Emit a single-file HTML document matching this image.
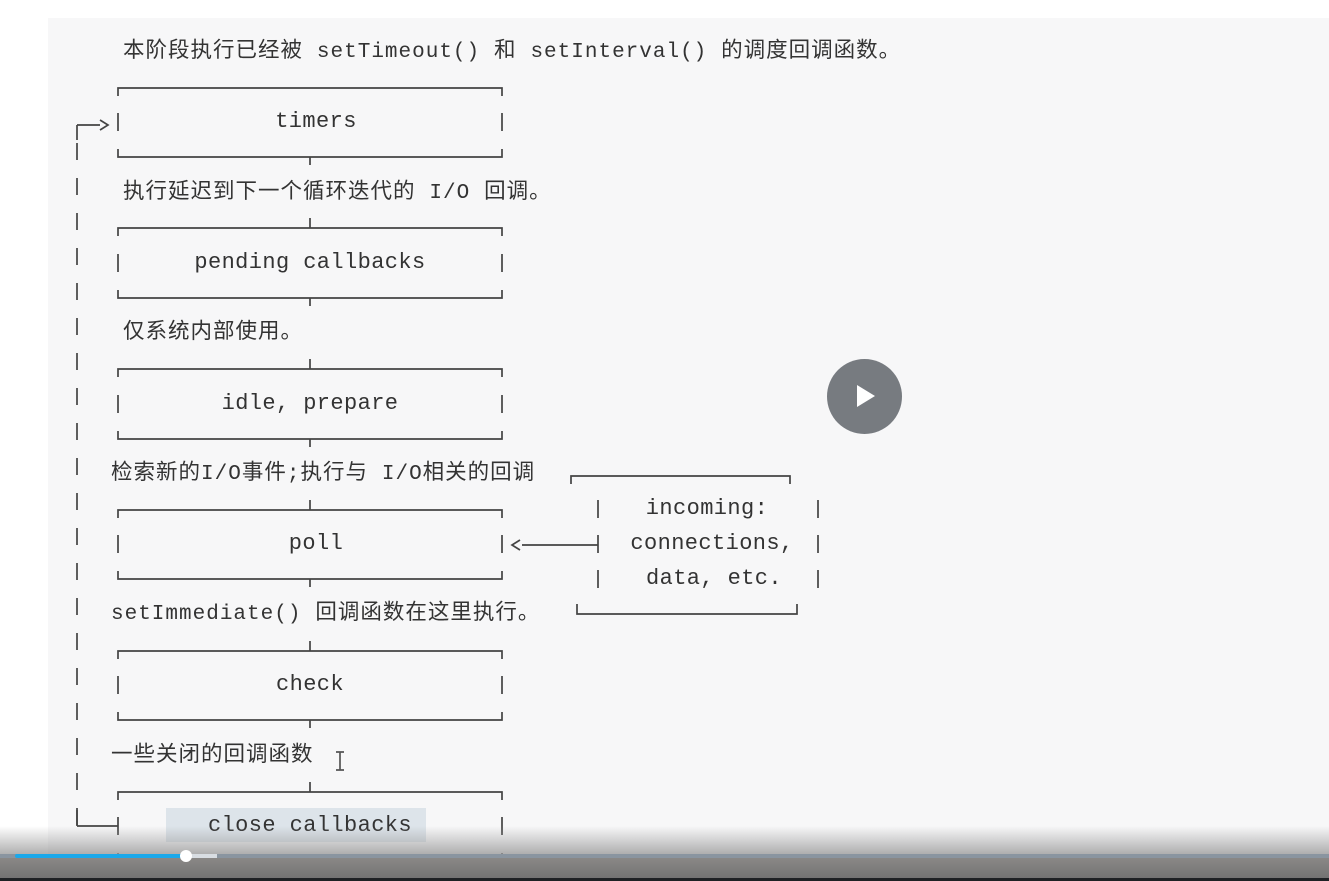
<!DOCTYPE html>
<html><head><meta charset="utf-8"><style>
*{margin:0;padding:0;box-sizing:border-box}
body{width:1329px;height:881px;overflow:hidden;background:#fff;position:relative;font-family:"Liberation Mono",monospace;color:#363636}
#panel{position:absolute;left:48px;top:18px;width:1281px;height:863px;background:#f7f7f8}
.m{position:absolute;font-family:"Liberation Mono",monospace;font-size:22px;letter-spacing:0.4px;line-height:24px;white-space:pre;color:#333}
.c{position:absolute;font-family:"Liberation Mono","Noto Sans CJK SC",monospace;font-size:21.5px;letter-spacing:1px;line-height:24px;white-space:pre;color:#333}
.c span{font-size:21px}
.ctr{transform:translateX(-50%);text-align:center}
svg{position:absolute;left:0;top:0}
</style></head><body>
<div id="panel"></div>
<div style="position:absolute;left:166px;top:808px;width:260px;height:34px;background:#dde4ea"></div>
<svg width="1329" height="881" id="lines"><g stroke="#444" stroke-width="1.7" fill="none">
<path d="M118 96V88H502V96 M118 113V131 M502 113V131 M118 149V157H502V149 M310 157V165"/>
<path d="M310 218V228 M118 236V228H502V236 M118 254V272 M502 254V272 M118 290V298H502V290 M310 298V306"/>
<path d="M310 359V369 M118 377V369H502V377 M118 395V413 M502 395V413 M118 431V439H502V431 M310 439V447"/>
<path d="M310 500V510 M118 518V510H502V518 M118 535V553 M502 535V553 M118 571V579H502V571 M310 579V587"/>
<path d="M310 641V651 M118 659V651H502V659 M118 676V694 M502 676V694 M118 712V720H502V712 M310 720V728"/>
<path d="M310 782V792 M118 800V792H502V800 M118 817V835 M502 817V835 M118 853V861H502V853"/>
<path d="M571 484V476H790V484 M598 500V518 M818 500V518 M598 535V553 M818 535V553 M598 570V588 M818 570V588 M577 604V614H797V604"/>
<path d="M522 545H598 M520 540L512 545L520 550"/>
<path d="M77 125H100 M100 120L108 125L100 130 M77 826H118"/>
<path d="M77 125V826" stroke-dasharray="17 18" stroke-dashoffset="-18"/>
<path d="M77 125V140 M77 810V826"/>
<path d="M336 752H344 M340 752V770 M336 770H344" stroke="#555"/>
</g></svg>
<div class="c" style="left:123px;top:40px">本阶段执行已经被 <span>setTimeout()</span> 和 <span>setInterval()</span> 的调度回调函数。</div>
<div class="c" style="left:123px;top:181px">执行延迟到下一个循环迭代的 <span>I/O</span> 回调。</div>
<div class="c" style="left:123px;top:321px">仅系统内部使用。</div>
<div class="c" style="left:111px;top:462px">检索新的<span>I/O</span>事件<span>;</span>执行与 <span>I/O</span>相关的回调</div>
<div class="c" style="left:111px;top:602px"><span>setImmediate()</span> 回调函数在这里执行。</div>
<div class="c" style="left:111px;top:744px">一些关闭的回调函数</div>
<div class="m ctr" style="left:316px;top:110px">timers</div>
<div class="m ctr" style="left:310px;top:251px">pending callbacks</div>
<div class="m ctr" style="left:310px;top:392px">idle, prepare</div>
<div class="m ctr" style="left:316px;top:532px">poll</div>
<div class="m ctr" style="left:310px;top:673px">check</div>
<div class="m ctr" style="left:310px;top:814px">close callbacks</div>
<div class="m ctr" style="left:707px;top:497px">incoming:</div>
<div class="m ctr" style="left:712px;top:532px">connections,</div>
<div class="m ctr" style="left:714px;top:567px">data, etc.</div>
<div style="position:absolute;left:827px;top:359px;width:75px;height:75px;border-radius:50%;background:#777b80"></div>
<div style="position:absolute;left:857px;top:385px;width:0;height:0;border-top:11px solid transparent;border-bottom:11px solid transparent;border-left:18px solid #fff"></div>
<div style="position:absolute;left:0;top:826px;width:1329px;height:28px;background:linear-gradient(rgba(170,170,170,0),rgba(150,150,150,0.75))"></div>
<div style="position:absolute;left:0;top:854px;width:1329px;height:4px;background:#8a95a0"></div>
<div style="position:absolute;left:0;top:858px;width:1329px;height:20px;background:linear-gradient(#8a8886,#737373)"></div>
<div style="position:absolute;left:0;top:878px;width:1329px;height:3px;background:#1e2124"></div>
<div style="position:absolute;left:15px;top:854px;width:172px;height:4px;background:#1aa8ea;border-radius:2px"></div>
<div style="position:absolute;left:187px;top:854px;width:30px;height:4px;background:#d8dde2"></div>
<div style="position:absolute;left:180px;top:850px;width:12px;height:12px;border-radius:50%;background:#fff"></div>
</body></html>
